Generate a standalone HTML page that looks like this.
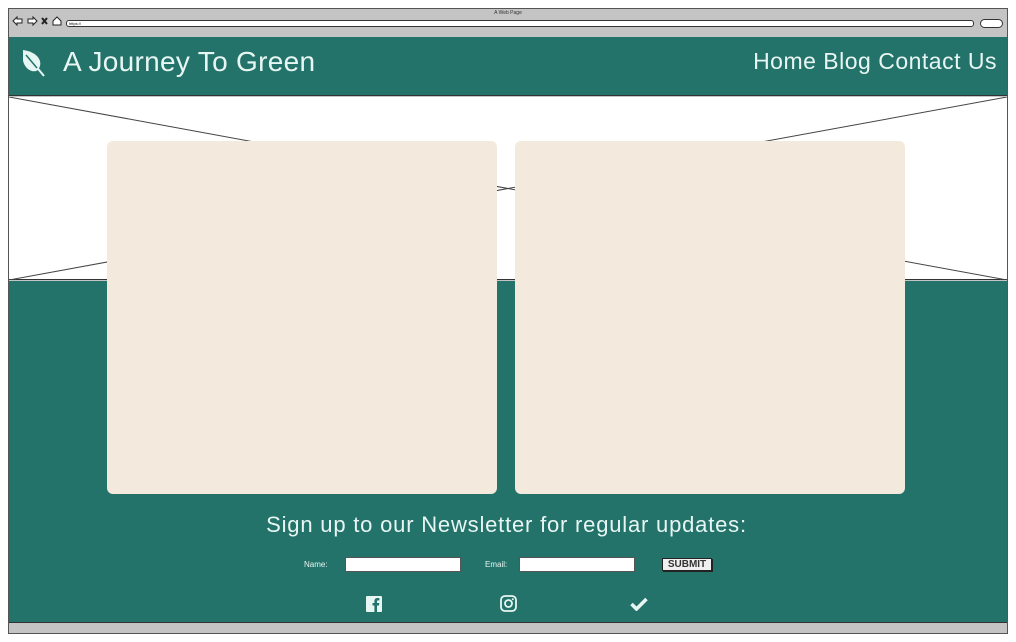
<!DOCTYPE html>
<html><head><meta charset="utf-8"><style>
*{margin:0;padding:0;box-sizing:border-box}
body{width:1016px;height:642px;background:#fff;position:relative;overflow:hidden;font-family:"Liberation Sans",sans-serif}
.abs{position:absolute}
.teal{background:#24736a}
</style></head><body>
<div class="abs" style="left:8px;top:8px;width:1000px;height:626px;border:1.5px solid #555;background:#c4c4c4"></div>
<div class="abs" style="left:0;top:10px;width:1016px;text-align:center;font-size:5px;color:#333">A Web Page</div>
<svg class="abs" style="left:12px;top:15px" width="52" height="12" viewBox="0 0 52 12">
<path d="M1 6 L5 2 V4 H10 V8 H5 V10 Z" fill="#fff" stroke="#222" stroke-width="1"/>
<path d="M25 6 L21 2 V4 H16 V8 H21 V10 Z" fill="#fff" stroke="#222" stroke-width="1"/>
<path d="M30 3 L35 9 M35 3 L30 9" stroke="#222" stroke-width="2"/>
<path d="M41 6 L45 2 L49 6 V10 H41 Z" fill="#fff" stroke="#222" stroke-width="1"/>
</svg>
<div class="abs" style="left:66px;top:20px;width:908px;height:7px;border:1px solid #333;border-radius:3px;background:#fff;font-size:4px;line-height:5px;padding-left:2px">https://</div>
<div class="abs" style="left:980px;top:19px;width:23px;height:9px;border:1px solid #333;border-radius:5px;background:#fff"></div>
<div class="abs teal" style="left:9px;top:37px;width:998px;height:59px;border-bottom:1px solid #333"></div>
<svg class="abs" style="left:20px;top:48px" width="26" height="30" viewBox="0 0 26 30">
<path d="M3 2 C18 4 24 14 18 22 C12 26 4 20 3 12 Z" fill="#e6f6f3"/>
<path d="M5 5 L24 28" stroke="#e6f6f3" stroke-width="2"/>
<path d="M6 7 L17 20" stroke="#24736a" stroke-width="1.5"/>
</svg>
<div class="abs" style="left:63px;top:46px;font-size:28px;letter-spacing:0.3px;color:#e8f6f3">A Journey To Green</div>
<div class="abs" style="right:19px;top:48px;font-size:23px;letter-spacing:0.5px;color:#e8f6f3">Home Blog Contact Us</div>
<div class="abs" style="left:9px;top:97px;width:998px;height:183px;background:#fff;border-bottom:1px solid #333"></div>
<svg class="abs" style="left:9px;top:97px" width="998" height="183"><path d="M0 0 L998 183 M0 183 L998 0" stroke="#444" stroke-width="1"/></svg>
<div class="abs teal" style="left:9px;top:281px;width:998px;height:342px;border-bottom:1px solid #333"></div>
<div class="abs" style="left:107px;top:141px;width:390px;height:353px;background:#f3e9dc;border-radius:6px"></div>
<div class="abs" style="left:515px;top:141px;width:390px;height:353px;background:#f3e9dc;border-radius:6px"></div>
<div class="abs" style="left:0;top:512px;width:1013px;text-align:center;font-size:22px;letter-spacing:0.8px;color:#e8f6f3">Sign up to our Newsletter for regular updates:</div>
<div class="abs" style="left:304px;top:560px;font-size:8px;color:#e8f6f3">Name:</div>
<div class="abs" style="left:345px;top:557px;width:116px;height:15px;background:#fff;border:1px solid #555"></div>
<div class="abs" style="left:485px;top:560px;font-size:8px;color:#e8f6f3">Email:</div>
<div class="abs" style="left:519px;top:557px;width:116px;height:15px;background:#fff;border:1px solid #555"></div>
<div class="abs" style="left:662px;top:558px;width:50px;height:13px;background:#f0f0f0;border:1px solid #222;box-shadow:1px 1px 0 #222;font-size:10px;line-height:11px;text-align:center;font-weight:bold;color:#333">SUBMIT</div>
<svg class="abs" style="left:366px;top:596px" width="16" height="16" viewBox="0 0 16 16"><rect width="16" height="16" rx="1" fill="#e8f6f3"/><path d="M11 16 V9.5 H13 L13.3 7 H11 V5.5 C11 4.8 11.3 4.4 12.2 4.4 H13.4 V2.2 C13 2.1 12.2 2 11.5 2 C9.6 2 8.4 3.1 8.4 5.2 V7 H6.5 V9.5 H8.4 V16 Z" fill="#24736a"/></svg>
<svg class="abs" style="left:500px;top:595px" width="17" height="17" viewBox="0 0 17 17"><rect x="1" y="1" width="15" height="15" rx="4" fill="none" stroke="#e8f6f3" stroke-width="1.8"/><circle cx="8.5" cy="8.5" r="3.5" fill="none" stroke="#e8f6f3" stroke-width="1.8"/><circle cx="12.8" cy="4.2" r="1" fill="#e8f6f3"/></svg>
<svg class="abs" style="left:630px;top:597px" width="18" height="14" viewBox="0 0 18 14"><path d="M1.5 7 L6.5 12 L16.5 2" fill="none" stroke="#e8f6f3" stroke-width="3.5"/></svg>
</body></html>
